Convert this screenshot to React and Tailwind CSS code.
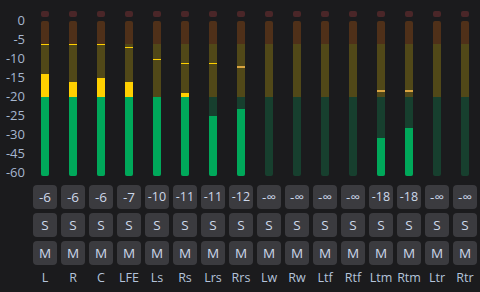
const scale = ['0', '-5', '-10', '-15', '-20', '-25', '-30', '-45', '-60'];

// peak / level are pixel offsets from the top of the 155px meter
const channels = [
  { name: 'L', value: '-6', peak: 23, level: 53 },
  { name: 'R', value: '-6', peak: 23, level: 61 },
  { name: 'C', value: '-6', peak: 23, level: 57 },
  { name: 'LFE', value: '-7', peak: 26, level: 61 },
  { name: 'Ls', value: '-10', peak: 38, level: 76 },
  { name: 'Rs', value: '-11', peak: 42, level: 72 },
  { name: 'Lrs', value: '-11', peak: 42, level: 95 },
  { name: 'Rrs', value: '-12', peak: 45, level: 88, hot: true },
  { name: 'Lw', value: '-∞' },
  { name: 'Rw', value: '-∞' },
  { name: 'Ltf', value: '-∞' },
  { name: 'Rtf', value: '-∞' },
  { name: 'Ltm', value: '-18', peak: 69, level: 117, hot: true },
  { name: 'Rtm', value: '-18', peak: 69, level: 107, hot: true },
  { name: 'Ltr', value: '-∞' },
  { name: 'Rtr', value: '-∞' },
];

const METER_H = 155;
const GREEN_TOP = 76;

function Meter({ peak, level, hot }) {
  const hasLevel = level !== undefined;
  const greenTop = hasLevel ? Math.max(level, GREEN_TOP) : METER_H;
  const yellowH = hasLevel && level < GREEN_TOP ? GREEN_TOP - level : 0;

  return (
    <div className="relative w-[8px] h-[155px] rounded-[2px] overflow-hidden flex flex-col">
      <div className="h-[23px] bg-[#4f3019]" />
      <div className="h-[53px] bg-[#514818]" />
      <div className="flex-1 bg-[#173f2e]" />

      {hasLevel && (
        <div
          className="absolute left-0 right-0 bottom-0 bg-[#00a85a]"
          style={{ height: METER_H - greenTop }}
        />
      )}
      {yellowH > 0 && (
        <div
          className="absolute left-0 right-0 bg-[#ffd000]"
          style={{ top: level, height: yellowH }}
        />
      )}
      {peak !== undefined && (
        <div
          className={`absolute left-0 right-0 ${hot ? 'h-[2px] bg-[#d9a441]' : 'h-[1px] bg-[#ffd000]'}`}
          style={{ top: peak }}
        />
      )}
    </div>
  );
}

function Btn({ children, small }) {
  return (
    <div
      className={`w-[24px] h-[24px] rounded-[4px] bg-[#3b3b3f] flex items-center justify-center text-[#cdd8ea] ${small ? 'text-[12.5px]' : 'text-[13.5px]'}`}
    >
      {children}
    </div>
  );
}

export default function App() {
  return (
    <div
      className="w-[480px] h-[292px] bg-[#1b1b1d] flex overflow-hidden"
      style={{ fontFamily: '"Open Sans", "Noto Sans", sans-serif' }}
    >
      {/* dB scale */}
      <div className="w-[33px] pt-[11px] flex flex-col">
        {scale.map((s) => (
          <div key={s} className="h-[19px] flex items-center justify-end pr-[8px] text-[13px] text-[#a6b6cf]">
            {s}
          </div>
        ))}
      </div>

      {/* Channel strips */}
      <div className="flex gap-[4px]">
        {channels.map((ch) => (
          <div key={ch.name} className="w-[24px] flex flex-col items-center pt-[11px]">
            <div className="w-[8px] h-[6px] rounded-[2px] bg-[#4a2628]" />
            <div className="mt-[4px]">
              <Meter peak={ch.peak} level={ch.level} hot={ch.hot} />
            </div>
            <div className="mt-[9px] flex flex-col gap-[4px]">
              <Btn small={ch.value.length > 2}>{ch.value}</Btn>
              <Btn>S</Btn>
              <Btn>M</Btn>
            </div>
            <div className="mt-[5px] h-[16px] flex items-center justify-center text-[12.5px] text-[#b4c3da] whitespace-nowrap">
              {ch.name}
            </div>
          </div>
        ))}
      </div>
    </div>
  );
}
